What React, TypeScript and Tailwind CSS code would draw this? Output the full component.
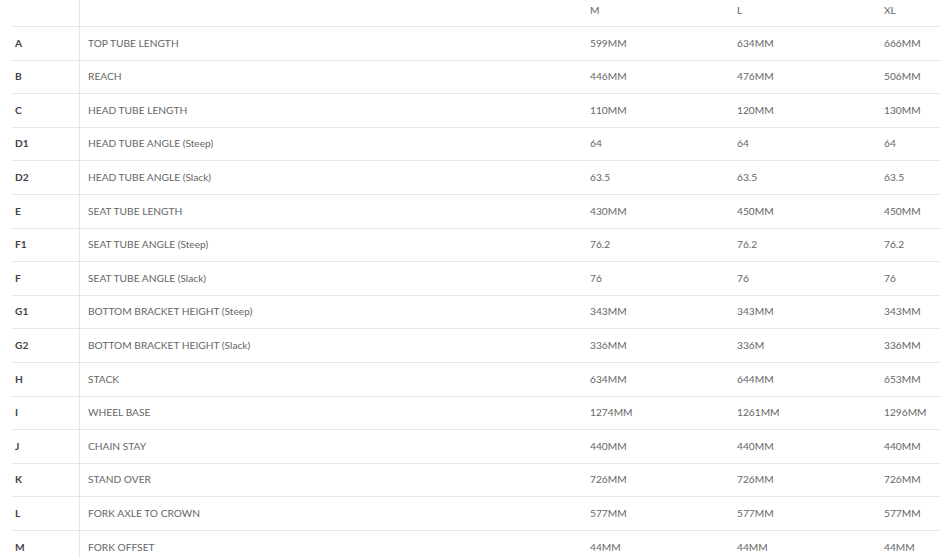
import React from 'react';

const rows: [string, string, string, string, string][] = [
  ['A', 'TOP TUBE LENGTH', '599MM', '634MM', '666MM'],
  ['B', 'REACH', '446MM', '476MM', '506MM'],
  ['C', 'HEAD TUBE LENGTH', '110MM', '120MM', '130MM'],
  ['D1', 'HEAD TUBE ANGLE (Steep)', '64', '64', '64'],
  ['D2', 'HEAD TUBE ANGLE (Slack)', '63.5', '63.5', '63.5'],
  ['E', 'SEAT TUBE LENGTH', '430MM', '450MM', '450MM'],
  ['F1', 'SEAT TUBE ANGLE (Steep)', '76.2', '76.2', '76.2'],
  ['F', 'SEAT TUBE ANGLE (Slack)', '76', '76', '76'],
  ['G1', 'BOTTOM BRACKET HEIGHT (Steep)', '343MM', '343MM', '343MM'],
  ['G2', 'BOTTOM BRACKET HEIGHT (Slack)', '336MM', '336M', '336MM'],
  ['H', 'STACK', '634MM', '644MM', '653MM'],
  ['I', 'WHEEL BASE', '1274MM', '1261MM', '1296MM'],
  ['J', 'CHAIN STAY', '440MM', '440MM', '440MM'],
  ['K', 'STAND OVER', '726MM', '726MM', '726MM'],
  ['L', 'FORK AXLE TO CROWN', '577MM', '577MM', '577MM'],
  ['M', 'FORK OFFSET', '44MM', '44MM', '44MM'],
];

const cols = 'grid grid-cols-[68px_502px_147px_147px_100px]';

export default function App() {
  return (
    <div className="w-[940px] h-[558px] overflow-hidden bg-white font-['Lato',sans-serif] text-[10.2px] text-[#666]">
      <div className="ml-3 w-[964px]">
        <div className={`${cols} h-[27px] border-b border-[#e6e6e6]`}>
          <div className="border-r border-[#e6e6e6]" />
          <div />
          <div className="pl-2 pt-[3px]">M</div>
          <div className="pl-2 pt-[3px]">L</div>
          <div className="pl-2 pt-[3px]">XL</div>
        </div>
        {rows.map((r, i) => (
          <div key={i} className={`${cols} h-[33.6px] border-b border-[#e6e6e6] items-stretch`}>
            <div className="border-r border-[#e6e6e6] pl-[3px] flex items-center font-bold text-[#444]">{r[0]}</div>
            <div className="pl-2 flex items-center">{r[1]}</div>
            <div className="pl-2 flex items-center">{r[2]}</div>
            <div className="pl-2 flex items-center">{r[3]}</div>
            <div className="pl-2 flex items-center">{r[4]}</div>
          </div>
        ))}
      </div>
    </div>
  );
}
